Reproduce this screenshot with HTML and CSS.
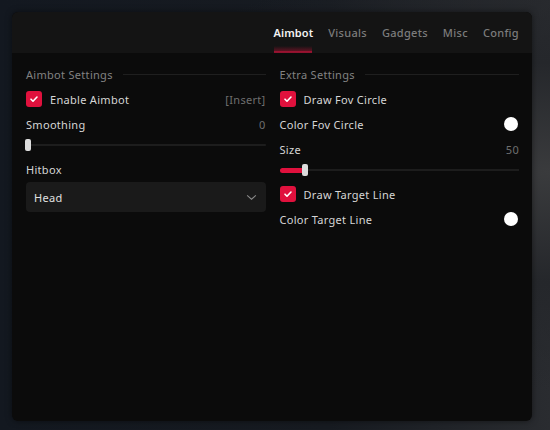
FILE: index.html
```html
<!DOCTYPE html>
<html lang="en">
  <head>
    <meta charset="UTF-8" />
    <meta name="viewport" content="width=device-width, initial-scale=1.0" />
    <title>Menu</title>
    <link rel="stylesheet" href="styles.css">
  </head>
  <body>
    <div class="menu">
      <div class="topbar">
        <div class="tabs">
          <span class="tab active">Aimbot</span>
          <span class="tab">Visuals</span>
          <span class="tab">Gadgets</span>
          <span class="tab">Misc</span>
          <span class="tab">Config</span>
        </div>
      </div>
      <div class="content">
        <div class="column">
          <div class="section-title"><span>Aimbot Settings</span></div>
          <div class="row">
            <span class="check"><svg viewBox="0 0 16 16"><path d="M5 8.2l2 2 4-4.2" /></svg></span>
            <span class="label">Enable Aimbot</span>
            <span class="value">[Insert]</span>
          </div>
          <div class="row">
            <span class="label">Smoothing</span>
            <span class="value">0</span>
          </div>
          <div class="slider">
            <div class="fill" style="width: 0%"></div>
            <div class="thumb"></div>
          </div>
          <div class="row">
            <span class="label">Hitbox</span>
          </div>
          <div class="select">
            <span>Head</span>
            <svg viewBox="0 0 12 8"><path d="M1 1.5l5 4.5 5-4.5" /></svg>
          </div>
        </div>
        <div class="column">
          <div class="section-title"><span>Extra Settings</span></div>
          <div class="row">
            <span class="check"><svg viewBox="0 0 16 16"><path d="M5 8.2l2 2 4-4.2" /></svg></span>
            <span class="label">Draw Fov Circle</span>
          </div>
          <div class="row">
            <span class="label">Color Fov Circle</span>
            <span class="swatch"></span>
          </div>
          <div class="row spaced">
            <span class="label">Size</span>
            <span class="value">50</span>
          </div>
          <div class="slider">
            <div class="fill" style="width: 10%"></div>
            <div class="thumb"></div>
          </div>
          <div class="row">
            <span class="check"><svg viewBox="0 0 16 16"><path d="M5 8.2l2 2 4-4.2" /></svg></span>
            <span class="label">Draw Target Line</span>
          </div>
          <div class="row">
            <span class="label">Color Target Line</span>
            <span class="swatch"></span>
          </div>
        </div>
      </div>
    </div>
  </body>
</html>
```

FILE: styles.css
```css
body {
  margin: 0;
  padding: 12px 18px 9px 12px;
  height: 430px;
  box-sizing: border-box;
  font-family: "Noto Sans", sans-serif;
  font-size: 11px;
  letter-spacing: 0.3px;
  color: #d6d6d6;
  background: radial-gradient(ellipse at 100% 40%, #3a3b3d 0%, #25272b 30%, transparent 60%),
    linear-gradient(90deg, #131820 0%, #171b21 60%, #2a2c30 100%);
}

.menu {
  height: 100%;
  background-color: #0b0b0b;
  border-radius: 6px;
  overflow: hidden;
  box-shadow: 0 0 6px rgba(0, 0, 0, 0.5);
}

.topbar {
  height: 41px;
  background-color: #141414;
  display: flex;
  justify-content: flex-end;
  padding-right: 13px;
}

.tabs {
  display: flex;
  gap: 15px;
}

.tab {
  position: relative;
  line-height: 41px;
  font-weight: 500;
  letter-spacing: 0.3px;
  color: #7c7c7c;
}

.tab.active {
  color: #f2f2f2;
  font-weight: 600;
  letter-spacing: 0.1px;
}

.tab.active::after {
  content: "";
  position: absolute;
  left: 1px;
  right: 1px;
  bottom: 0;
  height: 7px;
  background: linear-gradient(to bottom, rgba(225, 16, 60, 0), rgba(225, 16, 60, 0.35) 70%, #c8123a 85%, rgba(200, 18, 58, 0.4));
}

.content {
  display: grid;
  grid-template-columns: 1fr 1fr;
  gap: 14px;
  padding: 13px 13px 0 14px;
}

.section-title {
  display: flex;
  align-items: center;
  gap: 10px;
  height: 16px;
  color: #828282;
  margin-bottom: 9px;
}

.section-title::after {
  content: "";
  flex: 1;
  height: 1px;
  background-color: #1f1f1f;
}

.row {
  display: flex;
  align-items: center;
  height: 16px;
  margin-bottom: 9px;
}

.row.spaced {
  margin-top: 2px;
}

.label {
  flex: 1;
}

.value {
  color: #6f6f6f;
}

.check {
  width: 16px;
  height: 16px;
  border-radius: 3px;
  background-color: #e0113d;
  margin-right: 8px;
  display: flex;
}

.check svg {
  width: 16px;
  height: 16px;
  fill: none;
  stroke: #fff;
  stroke-width: 1.6;
  stroke-linecap: round;
  stroke-linejoin: round;
}

.swatch {
  width: 14px;
  height: 14px;
  border-radius: 50%;
  background-color: #fff;
  margin-right: 1px;
}

.slider {
  height: 12px;
  margin: -2px 0 10px;
  display: flex;
  align-items: center;
  background: linear-gradient(#1d1d1d, #1d1d1d) no-repeat center / 100% 2px;
}

.slider .fill {
  height: 5px;
  background-color: #e0113d;
  border-radius: 3px 0 0 3px;
}

.slider .thumb {
  width: 6px;
  height: 12px;
  border-radius: 2px;
  background-color: #dcdcdc;
  margin-left: -1px;
}

.select {
  height: 30px;
  margin-top: -4px;
  background-color: #1a1a1a;
  border-radius: 4px;
  display: flex;
  align-items: center;
  justify-content: space-between;
  padding: 0 9px 0 8px;
  color: #e0e0e0;
}

.select svg {
  width: 11px;
  height: 7px;
  fill: none;
  stroke: #8a8a8a;
  stroke-width: 1.2;
}
```
